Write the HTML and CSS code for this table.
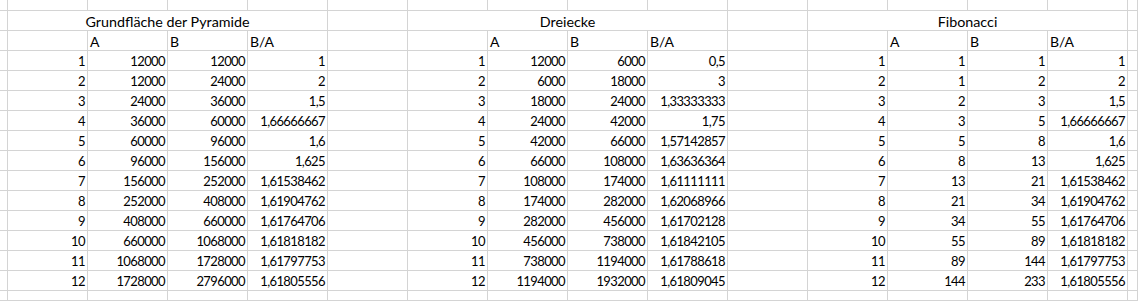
FILE: index.html
```html
<!DOCTYPE html>
<html lang="de">
<head>
<meta charset="utf-8">
<title>Tabelle</title>
<link rel="stylesheet" href="styles.css">
</head>
<body>
<div class="sheet">
<!-- row 0 -->
<div class="c"></div><div class="c"></div><div class="c"></div><div class="c"></div><div class="c"></div><div class="c"></div><div class="c"></div><div class="c"></div><div class="c"></div><div class="c"></div><div class="c"></div><div class="c"></div><div class="c"></div><div class="c"></div><div class="c"></div><div class="c"></div>
<!-- titles -->
<div class="c"></div><div class="c t">Grundfläche der Pyramide</div><div class="c"></div><div class="c t">Dreiecke</div><div class="c"></div><div class="c t">Fibonacci</div><div class="c"></div>
<!-- headers -->
<div class="c"></div><div class="c"></div><div class="c h">A</div><div class="c h">B</div><div class="c h">B/A</div><div class="c"></div><div class="c"></div><div class="c h">A</div><div class="c h">B</div><div class="c h">B/A</div><div class="c"></div><div class="c"></div><div class="c h">A</div><div class="c h">B</div><div class="c h">B/A</div><div class="c"></div>
<!-- 1 -->
<div class="c"></div><div class="c n">1</div><div class="c n">12000</div><div class="c n">12000</div><div class="c n">1</div><div class="c"></div><div class="c n">1</div><div class="c n">12000</div><div class="c n">6000</div><div class="c n">0,5</div><div class="c"></div><div class="c n">1</div><div class="c n">1</div><div class="c n">1</div><div class="c n">1</div><div class="c"></div>
<!-- 2 -->
<div class="c"></div><div class="c n">2</div><div class="c n">12000</div><div class="c n">24000</div><div class="c n">2</div><div class="c"></div><div class="c n">2</div><div class="c n">6000</div><div class="c n">18000</div><div class="c n">3</div><div class="c"></div><div class="c n">2</div><div class="c n">1</div><div class="c n">2</div><div class="c n">2</div><div class="c"></div>
<!-- 3 -->
<div class="c"></div><div class="c n">3</div><div class="c n">24000</div><div class="c n">36000</div><div class="c n">1,5</div><div class="c"></div><div class="c n">3</div><div class="c n">18000</div><div class="c n">24000</div><div class="c n">1,33333333</div><div class="c"></div><div class="c n">3</div><div class="c n">2</div><div class="c n">3</div><div class="c n">1,5</div><div class="c"></div>
<!-- 4 -->
<div class="c"></div><div class="c n">4</div><div class="c n">36000</div><div class="c n">60000</div><div class="c n">1,66666667</div><div class="c"></div><div class="c n">4</div><div class="c n">24000</div><div class="c n">42000</div><div class="c n">1,75</div><div class="c"></div><div class="c n">4</div><div class="c n">3</div><div class="c n">5</div><div class="c n">1,66666667</div><div class="c"></div>
<!-- 5 -->
<div class="c"></div><div class="c n">5</div><div class="c n">60000</div><div class="c n">96000</div><div class="c n">1,6</div><div class="c"></div><div class="c n">5</div><div class="c n">42000</div><div class="c n">66000</div><div class="c n">1,57142857</div><div class="c"></div><div class="c n">5</div><div class="c n">5</div><div class="c n">8</div><div class="c n">1,6</div><div class="c"></div>
<!-- 6 -->
<div class="c"></div><div class="c n">6</div><div class="c n">96000</div><div class="c n">156000</div><div class="c n">1,625</div><div class="c"></div><div class="c n">6</div><div class="c n">66000</div><div class="c n">108000</div><div class="c n">1,63636364</div><div class="c"></div><div class="c n">6</div><div class="c n">8</div><div class="c n">13</div><div class="c n">1,625</div><div class="c"></div>
<!-- 7 -->
<div class="c"></div><div class="c n">7</div><div class="c n">156000</div><div class="c n">252000</div><div class="c n">1,61538462</div><div class="c"></div><div class="c n">7</div><div class="c n">108000</div><div class="c n">174000</div><div class="c n">1,61111111</div><div class="c"></div><div class="c n">7</div><div class="c n">13</div><div class="c n">21</div><div class="c n">1,61538462</div><div class="c"></div>
<!-- 8 -->
<div class="c"></div><div class="c n">8</div><div class="c n">252000</div><div class="c n">408000</div><div class="c n">1,61904762</div><div class="c"></div><div class="c n">8</div><div class="c n">174000</div><div class="c n">282000</div><div class="c n">1,62068966</div><div class="c"></div><div class="c n">8</div><div class="c n">21</div><div class="c n">34</div><div class="c n">1,61904762</div><div class="c"></div>
<!-- 9 -->
<div class="c"></div><div class="c n">9</div><div class="c n">408000</div><div class="c n">660000</div><div class="c n">1,61764706</div><div class="c"></div><div class="c n">9</div><div class="c n">282000</div><div class="c n">456000</div><div class="c n">1,61702128</div><div class="c"></div><div class="c n">9</div><div class="c n">34</div><div class="c n">55</div><div class="c n">1,61764706</div><div class="c"></div>
<!-- 10 -->
<div class="c"></div><div class="c n">10</div><div class="c n">660000</div><div class="c n">1068000</div><div class="c n">1,61818182</div><div class="c"></div><div class="c n">10</div><div class="c n">456000</div><div class="c n">738000</div><div class="c n">1,61842105</div><div class="c"></div><div class="c n">10</div><div class="c n">55</div><div class="c n">89</div><div class="c n">1,61818182</div><div class="c"></div>
<!-- 11 -->
<div class="c"></div><div class="c n">11</div><div class="c n">1068000</div><div class="c n">1728000</div><div class="c n">1,61797753</div><div class="c"></div><div class="c n">11</div><div class="c n">738000</div><div class="c n">1194000</div><div class="c n">1,61788618</div><div class="c"></div><div class="c n">11</div><div class="c n">89</div><div class="c n">144</div><div class="c n">1,61797753</div><div class="c"></div>
<!-- 12 -->
<div class="c"></div><div class="c n">12</div><div class="c n">1728000</div><div class="c n">2796000</div><div class="c n">1,61805556</div><div class="c"></div><div class="c n">12</div><div class="c n">1194000</div><div class="c n">1932000</div><div class="c n">1,61809045</div><div class="c"></div><div class="c n">12</div><div class="c n">144</div><div class="c n">233</div><div class="c n">1,61805556</div><div class="c"></div>
<!-- bottom -->
<div class="c"></div><div class="c"></div><div class="c"></div><div class="c"></div><div class="c"></div><div class="c"></div><div class="c"></div><div class="c"></div><div class="c"></div><div class="c"></div><div class="c"></div><div class="c"></div><div class="c"></div><div class="c"></div><div class="c"></div><div class="c"></div>
</div>
</body>
</html>
```

FILE: styles.css
```css
html, body {
  margin: 0;
  padding: 0;
  background: #ffffff;
  overflow: hidden;
}

.sheet {
  display: grid;
  grid-template-columns: 8px repeat(14, 80px) 1fr;
  grid-template-rows: 11px repeat(14, 20px) 1fr;
  width: 1138px;
  height: 301px;
  font-family: Lato, "Liberation Sans", sans-serif;
  font-size: 13px;
  color: #000000;
}

.c {
  box-sizing: border-box;
  border-right: 1px solid #d4d4d4;
  border-bottom: 1px solid #d4d4d4;
  line-height: 19px;
  padding-top: 1px;
  white-space: nowrap;
  overflow: hidden;
}

.t {
  grid-column: span 4;
  text-align: center;
  font-size: 14.3px;
}

.h {
  text-align: left;
  padding-left: 2px;
  font-size: 14px;
}

.n {
  text-align: right;
  padding-right: 2px;
  letter-spacing: -0.6px;
}
```
